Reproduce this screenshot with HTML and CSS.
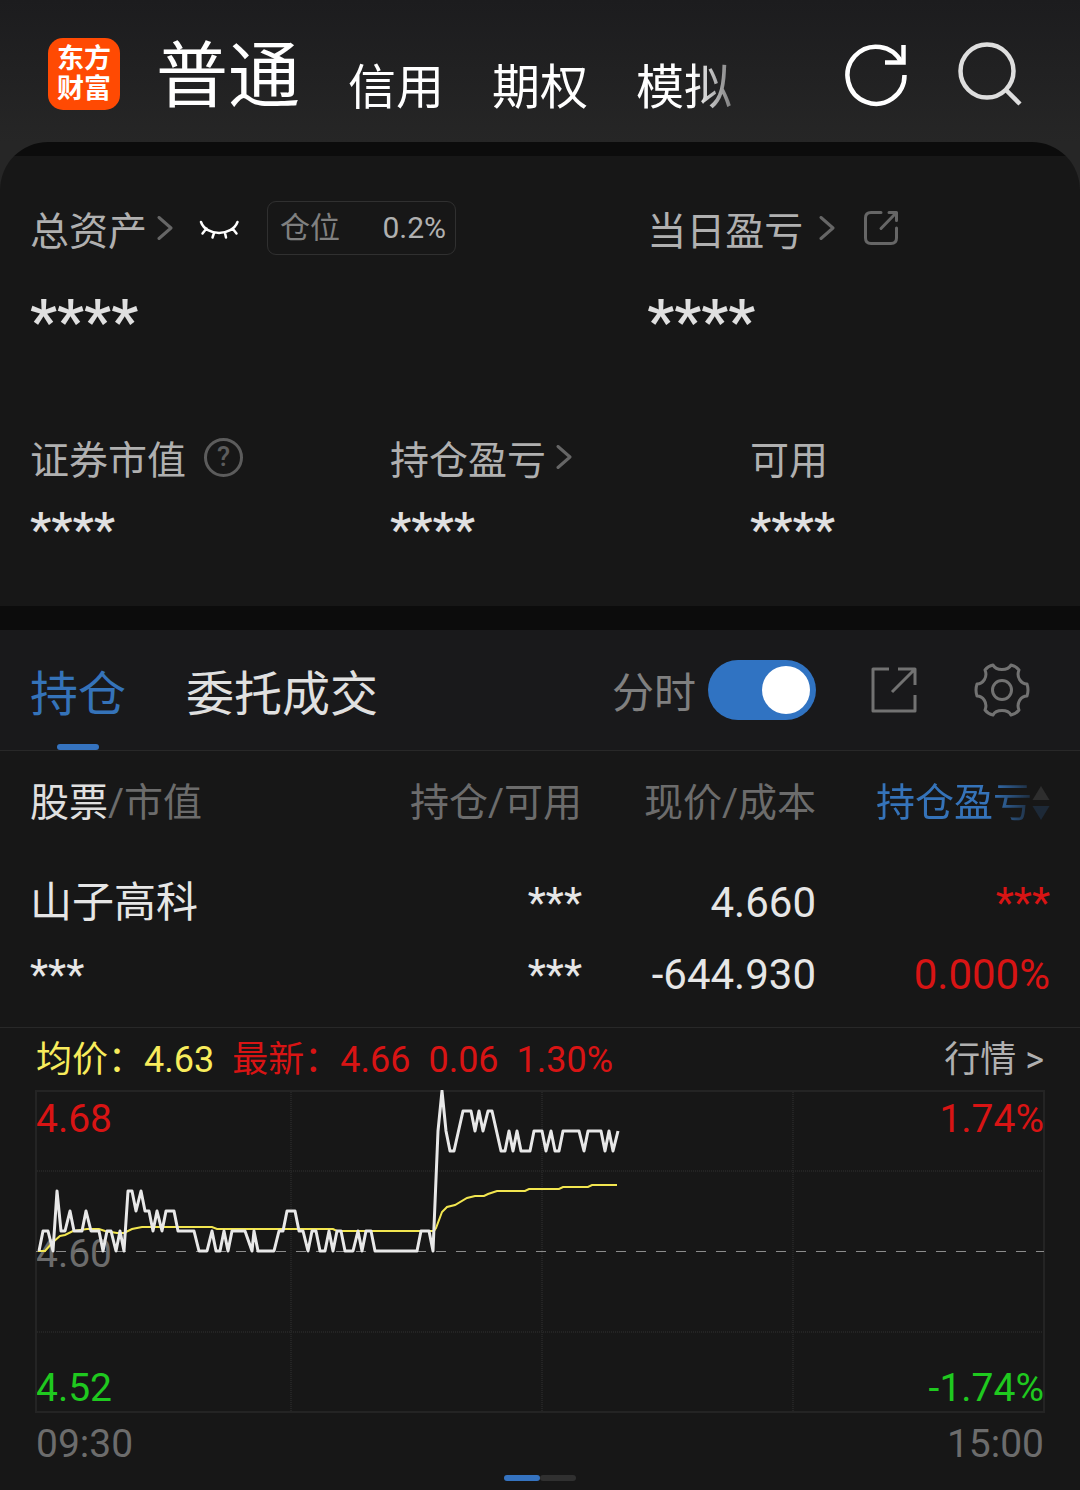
FILE: index.html
```html
<!DOCTYPE html>
<html lang="zh-CN">
<head>
<meta charset="utf-8">
<meta name="viewport" content="width=device-width, initial-scale=1">
<title>东方财富 - 交易</title>
<link rel="stylesheet" href="styles.css">
</head>
<body>
<div class="app">
  <header class="topbar">
    <div class="logo"><span>东方</span><span>财富</span></div>
    <nav class="accounts">
      <a class="account account-current" href="#normal">普通</a>
      <a class="account" href="#credit">信用</a>
      <a class="account" href="#option">期权</a>
      <a class="account" href="#demo">模拟</a>
    </nav>
    <div class="tools">
      <button class="icon-button" type="button" aria-label="刷新">
        <svg width="72" height="72" viewBox="0 0 72 72" fill="none" stroke="#fff" stroke-width="4.500">
          <path d="M64.500 37A28.500 28.500 0 1 1 61.500 24.500"/>
          <path d="M63.500 7V24.500H45"/>
        </svg>
      </button>
      <button class="icon-button" type="button" aria-label="搜索">
        <svg width="72" height="72" viewBox="0 0 72 72" fill="none" stroke="#dedede" stroke-width="4.500">
          <circle cx="33" cy="33" r="26.500"/>
          <path d="M51.500 51.500L66 66"/>
        </svg>
      </button>
    </div>
  </header>

  <section class="assets">
    <div class="assets-main">
      <div class="asset">
        <div class="asset-head">
          <a class="asset-label" href="#total">总资产
            <svg class="chevron" width="18" height="24" viewBox="0 0 18 24"><path d="M3 1.500L15 12L3 22.500"/></svg>
          </a>
          <button class="icon-button eye" type="button" aria-label="显示金额">
            <svg width="42" height="24" viewBox="0 0 42 24" fill="none" stroke="#fff" stroke-width="2.500" stroke-linecap="round">
              <path d="M3 6C8 20.500 34 20.500 39.500 6M8.500 12.500L4.500 17.500M16 17L14.500 21.500M27 17L28 21.500M34.500 12.500L38.500 17.500"/>
            </svg>
          </button>
          <div class="position"><span>仓位</span><span class="position-value">0.2%</span></div>
        </div>
        <div class="asset-value asset-value-large">****</div>
      </div>
      <div class="asset">
        <div class="asset-head">
          <a class="asset-label asset-label-wide" href="#today">当日盈亏
            <svg class="chevron" width="18" height="24" viewBox="0 0 18 24"><path d="M3 1.500L15 12L3 22.500"/></svg>
          </a>
          <button class="icon-button share" type="button" aria-label="分享">
            <svg width="36" height="36" viewBox="0 0 36 36" fill="none" stroke="#666" stroke-width="3" stroke-linecap="round" stroke-linejoin="round">
              <path d="M18 2.500H8Q2.500 2.500 2.500 8V28Q2.500 33.500 8 33.500H28Q33.500 33.500 33.500 28V18"/>
              <path d="M26 2.500H33.500V10.500M33 3L18 18.500"/>
            </svg>
          </button>
        </div>
        <div class="asset-value asset-value-large">****</div>
      </div>
    </div>
    <div class="assets-detail">
      <div class="asset">
        <div class="asset-head"><span class="asset-label">证券市值</span><button class="help" type="button">?</button></div>
        <div class="asset-value">****</div>
      </div>
      <div class="asset">
        <div class="asset-head">
          <a class="asset-label" href="#profit">持仓盈亏
            <svg class="chevron" width="18" height="24" viewBox="0 0 18 24"><path d="M3 1.500L15 12L3 22.500"/></svg>
          </a>
        </div>
        <div class="asset-value">****</div>
      </div>
      <div class="asset">
        <div class="asset-head"><span class="asset-label">可用</span></div>
        <div class="asset-value">****</div>
      </div>
    </div>
  </section>

  <main class="holdings">
    <div class="tabbar">
      <button class="tab tab-current" type="button">持仓</button>
      <button class="tab" type="button">委托成交</button>
      <label class="switch-label" for="minute">分时</label>
      <input class="switch" id="minute" type="checkbox" checked>
      <div class="tab-tools">
        <button class="icon-button" type="button" aria-label="分享持仓">
          <svg width="48" height="48" viewBox="0 0 48 48" fill="none" stroke="#727272" stroke-width="3" stroke-linejoin="round">
            <path d="M19 3H3V45H45V29"/>
            <path d="M28 3H45V19M44 4L22 26"/>
          </svg>
        </button>
        <button class="icon-button" type="button" aria-label="设置">
          <svg width="60" height="60" viewBox="0 0 60 60" fill="none" stroke="#727272" stroke-width="3" stroke-linejoin="round">
            <path d="M21 5C24 11 36 11 39 5Q44 6 47 10C44 17 49 24 55 24Q57 30 55 36C49 36 44 43 47 50Q44 54 39 55C36 49 24 49 21 55Q16 54 13 50C16 43 11 36 5 36Q3 30 5 24C11 24 16 17 13 10Q16 6 21 5Z"/>
            <circle cx="30" cy="30" r="9.500"/>
          </svg>
        </button>
      </div>
    </div>

    <table class="stocks">
      <colgroup><col><col class="col-mid"><col class="col-mid"><col class="col-last"></colgroup>
      <thead>
        <tr>
          <th scope="col"><span class="strong">股票</span>/市值</th>
          <th scope="col">持仓/可用</th>
          <th scope="col">现价/成本</th>
          <th scope="col">
            <button class="sort" type="button">持仓盈亏<svg width="18" height="36" viewBox="0 0 18 36"><path fill="#8a8a8a" d="M9 1L17.500 15H.5Z"/><path fill="#3573b9" d="M.5 21H17.500L9 35Z"/></svg></button>
          </th>
        </tr>
      </thead>
      <tbody>
        <tr><td>山子高科</td><td>***</td><td>4.660</td><td class="up">***</td></tr>
        <tr><td>***</td><td>***</td><td>-644.930</td><td class="up">0.000%</td></tr>
      </tbody>
    </table>

    <section class="quote">
      <div class="quote-head">
        <span class="average">均价：4.63</span>
        <span class="up">最新：4.66</span>
        <span class="up">0.06</span>
        <span class="up">1.30%</span>
        <a class="quote-link" href="#quote">行情 &gt;</a>
      </div>
      <div class="chart">
        <div class="scale"><span class="up">4.68</span><span class="flat">4.60</span><span class="down">4.52</span></div>
        <div class="scale scale-right"><span class="up">1.74%</span><span class="down">-1.74%</span></div>
        <svg class="plot" viewBox="0 0 1010 323" preserveAspectRatio="none" fill="none" aria-hidden="true">
          <g stroke="#242424" stroke-width="2">
            <rect x="1" y="1" width="1008" height="321"/>
            <path stroke-dasharray="1 1" d="M0 81H1010M0 242H1010M256 0V323M507 0V323M758 0V323"/>
          </g>
          <path stroke="#8c8c8c" stroke-dasharray="10 10" d="M1 161.500H1009"/>
          <polyline stroke="#f2e650" stroke-width="2" points="3,161 10,161 18,152 25,146 30,145 38,141 52,139 64,139 70,141 82,143 89,143 97,139 107,137 177,137 182,139 298,139 302,141 399,141 401,138 407,122 412,117 420,115 432,108 440,106 449,106 453,104 462,101 490,101 494,99 524,99 528,97 553,97 557,95 582,95"/>
          <polyline stroke="#e8e8e8" stroke-width="3" stroke-linejoin="round" points="4,161 8,141 13,141 18,161 22,101 26,141 30,141 35,121 39,141 47,141 51,121 56,141 64,141 68,161 72,141 76,141 81,161 85,141 89,161 93,101 97,101 101,121 106,101 110,121 114,121 118,141 122,121 127,141 131,121 139,121 143,141 159,141 164,161 172,161 177,141 181,161 185,161 189,141 193,161 197,141 210,141 217,161 219,141 223,161 239,161 244,141 248,141 252,121 260,121 264,141 268,141 273,161 277,141 281,141 285,161 290,161 294,141 298,161 302,141 306,141 310,161 318,161 323,141 327,161 331,141 336,141 340,161 382,161 386,141 394,141 398,161 403,41 407,1 411,41 415,61 419,61 428,21 436,21 440,41 444,21 448,41 453,21 457,21 466,61 470,61 474,41 478,61 482,41 486,61 495,61 499,41 507,41 511,61 516,41 520,61 524,61 528,41 544,41 549,61 553,41 566,41 570,61 574,41 578,61 583,41"/>
        </svg>
      </div>
      <div class="times"><span>09:30</span><span>15:00</span></div>
      <div class="pager"><span class="page page-current"></span><span class="page"></span></div>
    </section>
  </main>
</div>
</body>
</html>
```
FILE: styles.css
```css
* {
  box-sizing: border-box;
}

body {
  margin: 0;
  background: #171717;
  color: #e0e0e0;
  font-family: Roboto, "Noto Sans CJK SC", sans-serif;
  font-size: 39px;
  line-height: 54px;
}

a {
  color: inherit;
  text-decoration: none;
}

button {
  padding: 0;
  border: 0;
  background: none;
  color: inherit;
  font: inherit;
}

svg {
  display: block;
}

.app {
  background: linear-gradient(#1c1c1e, #262626 142px);
}

.icon-button {
  flex: none;
}

/* Top bar */

.topbar {
  display: flex;
  align-items: center;
  height: 142px;
  padding: 6px 54px 0 48px;
}

.logo {
  display: flex;
  flex: none;
  flex-direction: column;
  align-items: center;
  justify-content: center;
  width: 72px;
  height: 72px;
  border-radius: 15px;
  background: #ff4a03;
  color: #fff;
  font-size: 27px;
  font-weight: 700;
  line-height: 30px;
}

.accounts {
  display: flex;
  flex: 1;
  align-items: flex-end;
  gap: 48px;
  min-width: 0;
  margin: 0 20px 0 36px;
  padding-top: 6px;
  overflow: hidden;
  color: #fff;
  font-size: 48px;
  line-height: 62px;
  white-space: nowrap;
  mask-image: linear-gradient(to left, transparent 60px, #000 128px);
}

.account-current {
  font-size: 72px;
  line-height: 84px;
}

.tools {
  display: flex;
  gap: 42px;
}

/* Asset summary */

.assets {
  padding: 59px 0 46px;
  border-radius: 48px 48px 0 0;
  background: linear-gradient(#0c0c0c 14px, #171717 14px);
}

.assets-main,
.assets-detail {
  display: grid;
}

.assets-main {
  grid-template-columns: 4fr 3fr;
  margin-bottom: 72px;
}

.assets-detail {
  grid-template-columns: repeat(3, 1fr);
}

.asset {
  padding-left: 30px;
}

.asset-head {
  display: flex;
  align-items: center;
  height: 54px;
  color: #b0b0b0;
}

.asset-label {
  display: flex;
  align-items: center;
  gap: 9px;
  font-family: "Noto Sans CJK SC", sans-serif;
}

.asset-label-wide {
  gap: 15px;
}

.chevron {
  fill: none;
  stroke: #666;
  stroke-width: 3;
  stroke-linecap: round;
  stroke-linejoin: round;
}

.eye {
  margin: 0 27px 0 24px;
}

.share {
  margin-left: 27px;
}

.position {
  display: flex;
  justify-content: space-between;
  width: 189px;
  padding: 0 9px 0 12px;
  border: 1px solid #303030;
  border-radius: 9px;
  color: #808080;
  font-size: 30px;
  line-height: 52px;
}

.position-value {
  color: #b0b0b0;
}

.help {
  width: 39px;
  height: 39px;
  margin-left: 18px;
  border: 3px solid #5c5c5c;
  border-radius: 50%;
  color: #5c5c5c;
  font-size: 27px;
  font-weight: 500;
  line-height: 33px;
}

.asset-value {
  padding-top: 16px;
  font-size: 48px;
  font-weight: 500;
  line-height: 60px;
}

.asset-value-large {
  padding-top: 31px;
  font-size: 61px;
  line-height: 72px;
}

/* Holdings */

.holdings {
  border-top: 24px solid #0c0c0c;
  background: #171717;
}

.tabbar {
  display: flex;
  align-items: center;
  height: 121px;
  padding: 0 48px 0 30px;
  border-bottom: 1px solid #282828;
  background: #19191b;
}

.tab {
  position: relative;
  margin-right: 60px;
  font-family: "Noto Sans CJK SC", sans-serif;
  font-size: 48px;
  line-height: 120px;
}

.tab-current {
  color: #3573b9;
}

.tab-current::after {
  position: absolute;
  bottom: 0;
  left: 50%;
  width: 42px;
  height: 6px;
  margin-left: -21px;
  border-radius: 3px;
  background: #3573c0;
  content: "";
}

.switch-label {
  margin-left: auto;
  color: #808080;
  font-family: "Noto Sans CJK SC", sans-serif;
  font-size: 42px;
}

.switch {
  width: 108px;
  height: 60px;
  margin: 0 54px 0 12px;
  padding: 6px;
  border-radius: 30px;
  background: #3a3a3c;
  appearance: none;
}

.switch::before {
  display: block;
  width: 48px;
  height: 48px;
  border-radius: 50%;
  background: #fff;
  content: "";
}

.switch:checked {
  background: #3073c2;
}

.switch:checked::before {
  margin-left: auto;
}

.tab-tools {
  display: flex;
  align-items: center;
  gap: 54px;
}

.stocks {
  width: 100%;
  border-bottom: 1px solid #282828;
  border-collapse: separate;
  border-spacing: 0;
  table-layout: fixed;
}

.col-mid {
  width: 234px;
}

.col-last {
  width: 264px;
}

.stocks th,
.stocks td {
  padding: 0;
  text-align: right;
}

.stocks th {
  height: 100px;
  padding-top: 3px;
  color: #6c6c6c;
  font-weight: 400;
}

.stocks td {
  color: #e6e6e6;
  font-size: 42px;
  line-height: 72px;
}

.stocks tbody tr:first-child td {
  padding-top: 16px;
}

.stocks tbody tr:last-child td {
  padding-bottom: 16px;
}

.stocks th:first-child,
.stocks td:first-child {
  padding-left: 30px;
  text-align: left;
}

.stocks th:last-child,
.stocks td:last-child {
  padding-right: 30px;
}

.strong {
  color: #e0e0e0;
}

.sort {
  display: flex;
  align-items: center;
  margin-left: auto;
  color: #3573b9;
  mask-image: linear-gradient(to right, #000 66%, rgba(0, 0, 0, .2) 90%);
}

.stocks .up,
.up {
  color: #d81414;
}

.down {
  color: #1fc91f;
}

.flat {
  color: #6c6c6c;
}

/* Intraday chart */

.quote {
  padding: 0 35px 9px;
}

.quote-head {
  display: flex;
  gap: 18px;
  padding: 2px 1px 0;
  font-size: 36px;
  line-height: 60px;
}

.average {
  color: #f8ec5c;
}

.quote-link {
  margin-left: auto;
  color: #b0b0b0;
}

.chart {
  position: relative;
  display: flex;
  justify-content: space-between;
  height: 323px;
  padding: 7px 1px 3px;
  line-height: 44px;
}

.scale {
  display: flex;
  flex-direction: column;
  justify-content: space-between;
}

.scale-right {
  text-align: right;
}

.plot {
  position: absolute;
  top: 0;
  left: 0;
  width: 100%;
  height: 100%;
}

.times {
  display: flex;
  justify-content: space-between;
  padding: 0 1px;
  color: #6c6c6c;
  line-height: 62px;
}

.pager {
  display: flex;
  justify-content: center;
}

.page {
  width: 36px;
  height: 6px;
  border-radius: 3px;
  background: #303030;
}

.page-current {
  background: #3573c0;
}
```
